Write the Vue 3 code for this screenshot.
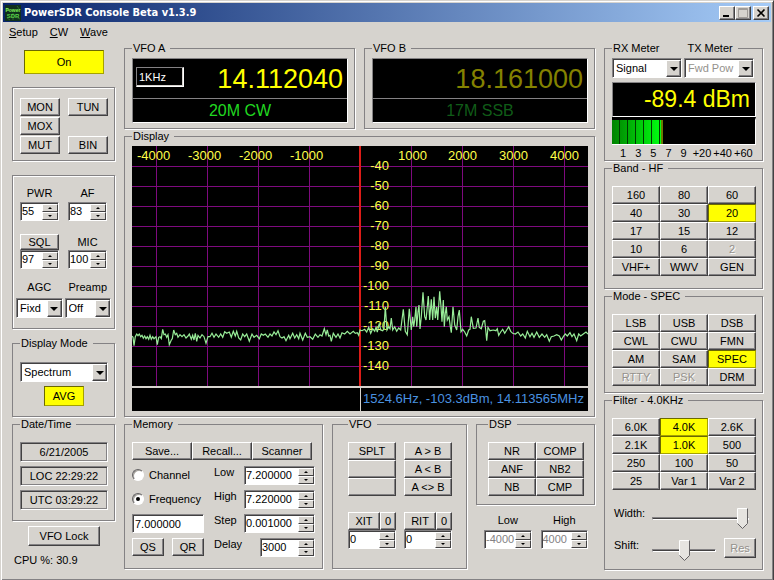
<script setup>
import { ref } from 'vue'

const bands = ['160', '80', '60', '40', '30', '20', '17', '15', '12', '10', '6', '2', 'VHF+', 'WWV', 'GEN']
const modes = ['LSB', 'USB', 'DSB', 'CWL', 'CWU', 'FMN', 'AM', 'SAM', 'SPEC', 'RTTY', 'PSK', 'DRM']
const filters = ['6.0K', '4.0K', '2.6K', '2.1K', '1.0K', '500', '250', '100', '50', '25', 'Var 1', 'Var 2']
const dsp = ['NR', 'COMP', 'ANF', 'NB2', 'NB', 'CMP']

const band = ref('20')
const mode = ref('SPEC')
const activeFilters = ['4.0K', '1.0K']
const memoryBy = ref('frequency')

const memoryFields = [
  { id: 'low', label: 'Low', value: '7.200000' },
  { id: 'high', label: 'High', value: '7.220000' },
  { id: 'step', label: 'Step', value: '0.001000' },
  { id: 'delay', label: 'Delay', value: '3000' },
]

const gridX = [24, 75, 126, 177, 279, 330, 381, 432]
const gridY = Array.from({ length: 11 }, (_, i) => 20 + i * 20)
const freqLabels = [
  [5, '-4000'], [56, '-3000'], [107, '-2000'], [158, '-1000'],
  [266, '1000'], [316, '2000'], [367, '3000'], [418, '4000'],
]

/* Spectrum samples in thirds of a pixel, grouped by sweep section. */
const sweeps = [
  {
    dx: -6, dy: 522,
    pts: '6,48 9,52 12,77 16,50 20,42 24,47 28,42 32,50 36,46 40,55 44,48 48,56 52,50 56,58 60,46 64,58 68,50 72,56 78,50 82,74 86,52 90,50 94,56 98,28 102,44 106,42 110,52 114,44 118,74 124,60 127,56 131,30 136,44 140,40 144,52 150,44 156,50 162,44 168,54 174,48 178,42 184,58 188,46 192,60 196,40 200,64 204,46 210,54 216,44 222,50 228,70 234,50',
  },
  {
    dx: -36, dy: -48,
    pts: '270,620 276,610 282,622 288,612 296,622 302,612 308,622 314,605 320,610 328,606 334,622 340,604 346,618 350,604 356,624 362,630 368,612 374,620 380,612 388,634 396,612 402,622 410,616 418,626 424,612 430,616 436,612 444,622 450,612 456,618 462,606 468,614 474,602 480,620 486,624 492,620 498,632 506,616 510,626 518,610 524,624 530,614 536,626 540,610 548,630 556,610 562,622 570,620 578,628 586,612 594,622 600,614 606,618 613,596 618,614 622,600 626,618 630,616 634,634 640,610 648,622 654,612 660,624 666,608 674,612 682,604 690,612 700,604 706,610 712,608 716,616 720,600',
  },
  {
    dx: 654, dy: -48,
    pts: '36,602 44,598 50,606 56,592 62,610 68,596 74,604 78,592 82,606 88,580 92,600 98,602 102,596 106,530 111,600 116,590 120,596 124,564 128,600 134,590 140,604 146,594 152,600 160,538 166,604 172,614 178,536 184,600 188,560 191,590 194,570 198,530 200,590 204,545 207,525 210,597 214,560 219,487 224,560 228,570 231,540 235,498 239,570 244,508 248,570 252,500 256,565 260,530 263,570 269,484 273,530 276,575 280,510 283,590 286,550 289,530 292,570 297,560 301,590 304,608 309,530 314,585 320,600 324,560 328,540 333,605 338,598 344,606 350,618 356,600 360,598 364,560 370,595 378,594 384,564 388,592 394,596 400,574 404,572 407,600 410,632 414,592 420,602 430,600 438,602 442,596 446,616 452,606 458,598 464,610 470,600 476,590 482,604 488,610 496,612 504,606 512,618 518,612 526,624 532,604 540,620 546,610 552,622 560,606 568,622 576,612 584,622 590,614 598,634 604,620 612,618 620,614 628,618 634,630 640,620 646,612 652,618 660,608 666,620 672,612 680,632 686,612 692,618 700,612 708,606 714,612',
  },
]
const trace = sweeps
  .flatMap(({ dx, dy, pts }) =>
    pts.split(' ').map((p) => {
      const [x, y] = p.split(',').map(Number)
      return `${((x + dx) / 3).toFixed(1)},${((y + dy) / 3).toFixed(1)}`
    }),
  )
  .join(' ')
</script>

<template>
  <div class="window">
    <header class="titlebar">
      <svg class="logo" viewBox="0 0 16 16" aria-hidden="true">
        <rect width="16" height="16" fill="#10301c" />
        <path d="M1 3l3 3M12 1l3 4M2 13l3 2M11 12l4 2M8 8v7" stroke="#2c6a2c" fill="none" />
        <text x="8" y="7" text-anchor="middle" class="logo-text">Power</text>
        <text x="8" y="13" text-anchor="middle" class="logo-text logo-big">SDR</text>
      </svg>
      <h1>PowerSDR Console Beta v1.3.9</h1>
      <div class="sysbuttons">
        <button class="btn" aria-label="Minimize"><svg viewBox="0 0 12 10"><rect x="2" y="7" width="6" height="2" /></svg></button>
        <button class="btn" aria-label="Maximize" disabled><svg viewBox="0 0 12 10"><path d="M1.500 .5h9v9h-9zM2 1.500h8" fill="none" stroke="#a09c98" /></svg></button>
        <button class="btn close" aria-label="Close"><svg viewBox="0 0 12 10"><path d="M2.5 1.5l7 7M9.5 1.5l-7 7" fill="none" stroke="#000" stroke-width="1.6" /></svg></button>
      </div>
    </header>

    <nav class="menu">
      <a href="#setup"><u>S</u>etup</a>
      <a href="#cw"><u>C</u>W</a>
      <a href="#wave"><u>W</u>ave</a>
    </nav>

    <main>
      <div class="col left">
        <button class="btn lit power">On</button>

        <div class="panel toggles">
          <button class="btn">MON</button>
          <button class="btn">TUN</button>
          <button class="btn first">MOX</button>
          <button class="btn first">MUT</button>
          <button class="btn">BIN</button>
        </div>

        <div class="panel levels">
          <div class="pair spins">
            <div class="cell gap2">
              <label for="pwr">PWR</label>
              <div class="spin"><input id="pwr" value="55" /><span class="arrows"><button aria-label="PWR up"></button><button aria-label="PWR down"></button></span></div>
            </div>
            <div class="cell gap2">
              <label for="af">AF</label>
              <div class="spin"><input id="af" value="83" /><span class="arrows"><button aria-label="AF up"></button><button aria-label="AF down"></button></span></div>
            </div>
          </div>
          <div class="pair spins squelch">
            <div class="cell">
              <button class="btn sql">SQL</button>
              <div class="spin"><input aria-label="SQL" value="97" /><span class="arrows"><button aria-label="SQL up"></button><button aria-label="SQL down"></button></span></div>
            </div>
            <div class="cell">
              <label class="tall" for="mic">MIC</label>
              <div class="spin"><input id="mic" value="100" /><span class="arrows"><button aria-label="MIC up"></button><button aria-label="MIC down"></button></span></div>
            </div>
          </div>
          <div class="pair combos">
            <div class="cell gap4">
              <label for="agc">AGC</label>
              <div class="combo"><select id="agc"><option>Fixd</option></select><span class="drop"></span></div>
            </div>
            <div class="cell gap4">
              <label for="preamp">Preamp</label>
              <div class="combo"><select id="preamp"><option>Off</option></select><span class="drop"></span></div>
            </div>
          </div>
        </div>

        <fieldset class="dispmode">
          <legend>Display Mode</legend>
          <div class="combo"><select aria-label="Display Mode"><option>Spectrum</option></select><span class="drop"></span></div>
          <button class="btn lit avg">AVG</button>
        </fieldset>

        <fieldset class="clock">
          <legend>Date/Time</legend>
          <output>6/21/2005</output>
          <output>LOC 22:29:22</output>
          <output>UTC 03:29:22</output>
        </fieldset>

        <button class="btn lock">VFO Lock</button>
        <p class="cpu">CPU %: 30.9</p>
      </div>

      <div class="col center">
        <div class="vfos">
          <fieldset>
            <legend>VFO A</legend>
            <div class="readout">
              <div class="freq"><input class="stepsize" aria-label="Tuning step" value="1KHz" readonly /><span>14.112040</span></div>
              <div class="bandname">20M CW</div>
            </div>
          </fieldset>
          <fieldset class="dim">
            <legend>VFO B</legend>
            <div class="readout">
              <div class="freq"><span>18.161000</span></div>
              <div class="bandname">17M SSB</div>
            </div>
          </fieldset>
        </div>

        <fieldset class="display">
          <legend>Display</legend>
          <svg class="scope" viewBox="0 0 456 240" role="img" aria-label="Spectrum">
            <rect width="456" height="240" fill="#000" />
            <g fill="#7e0a7e">
              <rect v-for="y in gridY" :key="y" x="0" :y="y" width="456" height="1" />
              <rect v-for="x in gridX" :key="x" :x="x" y="0" width="1" height="240" />
            </g>
            <rect x="227" y="0" width="2" height="240" fill="#dc1c18" />
            <g class="axis">
              <text v-for="[x, t] in freqLabels" :key="t" :x="x" y="14">{{ t }}</text>
              <text v-for="(y, i) in gridY" :key="y" x="257" :y="y + 4" text-anchor="end">{{ -40 - i * 10 }}</text>
            </g>
            <polyline :points="trace" fill="none" stroke="#98ec98" stroke-width="1.2" />
          </svg>
          <div class="status">
            <span></span>
            <span class="cursor">1524.6Hz, -103.3dBm, 14.113565MHz</span>
          </div>
        </fieldset>

        <div class="bottom">
          <fieldset class="memory">
            <legend>Memory</legend>
            <div class="actions">
              <button class="btn">Save...</button>
              <button class="btn">Recall...</button>
              <button class="btn">Scanner</button>
            </div>
            <div class="memgrid">
              <div class="memleft">
                <label class="radio"><input v-model="memoryBy" type="radio" value="channel" />Channel</label>
                <label class="radio"><input v-model="memoryBy" type="radio" value="frequency" />Frequency</label>
                <input class="text" aria-label="Memory frequency" value="7.000000" />
                <div class="quick">
                  <button class="btn">QS</button>
                  <button class="btn">QR</button>
                </div>
              </div>
              <div class="memright">
                <div v-for="f in memoryFields" :key="f.id" class="field">
                  <label :for="f.id">{{ f.label }}</label>
                  <div class="spin" :class="{ short: f.id === 'delay' }">
                    <input :id="f.id" :value="f.value" /><span class="arrows"><button :aria-label="f.label + ' up'"></button><button :aria-label="f.label + ' down'"></button></span>
                  </div>
                </div>
              </div>
            </div>
          </fieldset>

          <fieldset class="vfo">
            <legend>VFO</legend>
            <div class="vfocols">
              <div class="stack">
                <button class="btn">SPLT</button>
                <button class="btn" aria-label="Spare 1"></button>
                <button class="btn" aria-label="Spare 2"></button>
              </div>
              <div class="stack">
                <button class="btn">A &gt; B</button>
                <button class="btn">A &lt; B</button>
                <button class="btn">A &lt;&gt; B</button>
              </div>
              <div v-for="t in ['XIT', 'RIT']" :key="t" class="offset">
                <div class="tune"><button class="btn">{{ t }}</button><button class="btn zero">0</button></div>
                <div class="spin"><input :aria-label="t" value="0" /><span class="arrows"><button :aria-label="t + ' up'"></button><button :aria-label="t + ' down'"></button></span></div>
              </div>
            </div>
          </fieldset>

          <div class="dspcol">
            <fieldset class="dsp">
              <legend>DSP</legend>
              <div class="two">
                <button v-for="d in dsp" :key="d" class="btn">{{ d }}</button>
              </div>
            </fieldset>
            <div class="edges">
              <div class="cell gap3">
                <label for="flow">Low</label>
                <div class="spin"><input id="flow" value="-4000" disabled /><span class="arrows"><button disabled aria-label="Low up"></button><button disabled aria-label="Low down"></button></span></div>
              </div>
              <div class="cell gap3">
                <label for="fhigh">High</label>
                <div class="spin"><input id="fhigh" value="4000" disabled /><span class="arrows"><button disabled aria-label="High up"></button><button disabled aria-label="High down"></button></span></div>
              </div>
            </div>
          </div>
        </div>
      </div>

      <div class="col right">
        <fieldset class="meter">
          <legend><label for="rx">RX Meter</label><label for="tx">TX Meter</label></legend>
          <div class="metercombos">
            <div class="combo"><select id="rx"><option>Signal</option></select><span class="drop"></span></div>
            <div class="combo"><select id="tx" disabled><option>Fwd Pow</option></select><span class="drop"></span></div>
          </div>
          <div class="level">-89.4 dBm</div>
          <div class="bar"><span class="fill"></span></div>
          <div class="scale">
            <div class="units"><span>1</span><span>3</span><span>5</span><span>7</span><span>9</span></div>
            <div class="over"><span>+20</span><span>+40</span><span>+60</span></div>
          </div>
        </fieldset>

        <fieldset class="keys">
          <legend>Band - HF</legend>
          <div class="three">
            <button v-for="b in bands" :key="b" class="btn" :class="{ lit: b === band }" :disabled="b === '2'" @click="band = b">{{ b }}</button>
          </div>
        </fieldset>

        <fieldset class="keys short">
          <legend>Mode - {{ mode }}</legend>
          <div class="three">
            <button v-for="m in modes" :key="m" class="btn" :class="{ lit: m === mode }" :disabled="m === 'RTTY' || m === 'PSK'" @click="mode = m">{{ m }}</button>
          </div>
        </fieldset>

        <fieldset class="keys filter">
          <legend>Filter - 4.0KHz</legend>
          <div class="three">
            <button v-for="f in filters" :key="f" class="btn" :class="{ lit: activeFilters.includes(f) }">{{ f }}</button>
          </div>
          <div class="sliderrow">
            <label for="width">Width:</label>
            <input id="width" type="range" min="0" max="100" value="100" />
          </div>
          <div class="sliderrow shift">
            <label for="shift">Shift:</label>
            <input id="shift" type="range" min="0" max="100" value="50" />
            <button class="btn res" disabled>Res</button>
          </div>
        </fieldset>
      </div>
    </main>
  </div>
</template>

<style>
body {
  margin: 0;
  background: #d6d3ce;
}
</style>

<style scoped>
* {
  box-sizing: border-box;
}
.window {
  min-height: 100vh;
  min-width: 774px;
  padding: 2px;
  border: 1px solid;
  border-color: #d6d3ce #424142 #424142 #d6d3ce;
  box-shadow: inset 1px 1px 0 #fff, inset -1px -1px 0 #848284;
  background: #d6d3ce;
  color: #000;
  font: 11px/13px 'Liberation Sans', Arial, sans-serif;
}
input,
select,
button {
  font: inherit;
  color: inherit;
  margin: 0;
  border-radius: 0;
}
.titlebar {
  display: flex;
  align-items: center;
  height: 19px;
  padding: 0 2px;
  background: linear-gradient(90deg, #08246b, #a5cbf7);
}
.logo {
  width: 16px;
  height: 16px;
  margin-right: 3px;
}
.logo-text {
  font: bold 5px 'Liberation Sans', sans-serif;
  fill: #7ef05a;
}
.logo-big {
  font-size: 6px;
  fill: #5ad048;
}
h1 {
  flex: 1;
  margin: 0;
  color: #fff;
  font: bold 11px/15px 'DejaVu Sans Condensed', 'DejaVu Sans', sans-serif;
}
.sysbuttons {
  display: flex;
}
.sysbuttons .btn {
  width: 16px;
  height: 14px;
}
.sysbuttons svg {
  display: block;
  width: 12px;
  height: 10px;
  margin: 0 auto;
}
.sysbuttons .close {
  margin-left: 2px;
}
.menu {
  display: flex;
  gap: 12px;
  height: 20px;
  padding: 4px 6px;
}
.menu a {
  color: inherit;
  text-decoration: none;
}
main {
  display: grid;
  grid-template-columns: 103px 1fr 159px;
  gap: 9px;
  padding: 0 8px 8px 9px;
}
.col {
  display: flex;
  flex-direction: column;
  gap: 1px;
  min-width: 0;
}
.btn {
  height: 18px;
  padding: 0;
  border: 1px solid;
  border-color: #fff #424142 #424142 #fff;
  box-shadow: inset -1px -1px 0 #848284;
  background: #d6d3ce;
  text-align: center;
  line-height: 14px;
  white-space: nowrap;
}
.btn:disabled {
  color: #94918c;
  text-shadow: 1px 1px 0 #fff;
}
.btn.lit {
  border-color: #6b6900 #a5a200 #a5a200 #6b6900;
  box-shadow: none;
  background: #ff0;
}
fieldset {
  min-width: 0;
  margin: 0;
  padding: 0 6px 0 7px;
  border: 1px solid #848284;
  box-shadow: 1px 1px 0 #fff;
}
legend {
  height: 13px;
  padding: 0 5px 0 1px;
}
.panel {
  border: 1px solid #848284;
  box-shadow: 1px 1px 0 #fff, inset 1px 1px 0 #fff;
}

.spin {
  display: flex;
  height: 19px;
  border: 1px solid;
  border-color: #848284 #fff #fff #848284;
  box-shadow: inset 1px 1px 0 #424142;
  background: #fff;
}
.spin input {
  flex: 1;
  width: 0;
  min-width: 0;
  padding: 0 0 0 1px;
  border: 0;
  background: none;
  outline: 0;
}
.spin input:disabled {
  color: #848284;
}
.arrows {
  display: flex;
  flex-direction: column;
  width: 16px;
  padding-top: 1px;
}
.arrows button {
  display: grid;
  place-items: center;
  flex: 1;
  min-height: 0;
  padding: 0;
  border: 1px solid;
  border-color: #fff #424142 #424142 #fff;
  background: #d6d3ce;
}
.arrows button::after {
  content: '';
  border: 2px solid transparent;
  border-top: 0;
  border-bottom-color: #000;
}
.arrows button:last-child::after {
  border-top: 2px solid #000;
  border-bottom: 0;
}
.combo {
  position: relative;
  height: 20px;
  border: 1px solid;
  border-color: #848284 #fff #fff #848284;
  box-shadow: inset 1px 1px 0 #424142;
  background: #fff;
}
.combo select {
  display: block;
  width: 100%;
  height: 18px;
  padding: 0 16px 0 3px;
  border: 0;
  background: none;
  appearance: none;
}
.combo select:disabled {
  color: #94918c;
  opacity: 1;
}
.drop {
  position: absolute;
  top: 1px;
  right: 0;
  bottom: 0;
  display: grid;
  place-items: center;
  width: 15px;
  border: 1px solid;
  border-color: #fff #424142 #424142 #fff;
  box-shadow: inset -1px -1px 0 #848284;
  background: #d6d3ce;
  pointer-events: none;
}
.drop::after {
  content: '';
  border: 4px solid transparent;
  border-top-color: #000;
  border-bottom: 0;
}

.power {
  width: 80px;
  height: 24px;
  margin: 8px 0 12px 12px;
}
.toggles {
  display: grid;
  grid-template-columns: 1fr 1fr;
  gap: 1px 8px;
  padding: 10px 6px 6px 7px;
}
.first {
  grid-column: 1;
}
.levels {
  margin-top: 13px;
  padding: 11px 3px 10px;
}
.pair {
  display: grid;
  grid-template-columns: 1fr 1fr;
}
.spins {
  gap: 9px;
  padding: 0 4px;
}
.combos {
  gap: 2px;
  margin-top: 12px;
}
.squelch {
  margin-top: 13px;
}
.cell {
  display: flex;
  flex-direction: column;
  min-width: 0;
  text-align: center;
}
.gap2 {
  gap: 2px;
}
.gap3 {
  gap: 3px;
}
.gap4 {
  gap: 4px;
}
.sql,
.tall {
  height: 16px;
}
.tall {
  line-height: 16px;
}
.dispmode {
  display: flex;
  flex-direction: column;
  gap: 4px;
  margin-top: 7px;
  padding-top: 12px;
  padding-bottom: 10px;
}
.avg {
  align-self: center;
  width: 40px;
  height: 20px;
}
.clock {
  display: flex;
  flex-direction: column;
  gap: 4px;
  padding-top: 11px;
  padding-bottom: 10px;
}
.clock output {
  height: 20px;
  border: 1px solid;
  border-color: #848284 #fff #fff #848284;
  box-shadow: inset 1px 1px 0 #424142, inset -1px -1px 0 #848284;
  line-height: 18px;
  text-align: center;
}
.lock {
  width: 72px;
  height: 20px;
  margin: 4px 0 7px 16px;
}
.cpu {
  margin: 0 0 0 2px;
}

.vfos {
  display: grid;
  grid-template-columns: 1fr 1fr;
  gap: 9px;
}
.vfos fieldset {
  padding-top: 3px;
  padding-bottom: 5px;
}
.readout {
  border: 1px solid;
  border-color: #848284 #fff #fff #848284;
  background: #000;
}
.freq {
  display: flex;
  align-items: center;
  justify-content: space-between;
  height: 40px;
  padding: 0 4px 0 3px;
  border-bottom: 1px solid #848284;
  color: #ff0;
  font-size: 27px;
  line-height: 38px;
}
.freq span {
  margin-left: auto;
}
.stepsize {
  width: 48px;
  height: 20px;
  margin-bottom: 4px;
  padding: 0 2px;
  border: 1px solid;
  border-color: #848284 #fff #fff #848284;
  box-shadow: inset -1px -1px 0 #d6d3ce;
  background: #000;
  color: #fff;
  font-size: 11px;
}
.bandname {
  height: 23px;
  color: #20d820;
  font-size: 16px;
  line-height: 23px;
  text-align: center;
}
.dim .freq {
  color: #848200;
}
.dim .bandname {
  color: #105c18;
}
.display {
  padding-top: 3px;
  padding-bottom: 5px;
}
.scope {
  display: block;
  width: 100%;
}
.axis {
  fill: #ffff4a;
  font-size: 13px;
}
.status {
  display: grid;
  grid-template-columns: 1fr 1fr;
  height: 23px;
  margin-top: 2px;
  background: #000;
  color: #4a92e0;
  font-size: 13px;
  line-height: 21px;
}
.cursor {
  padding-left: 2px;
  border-left: 1px solid #d6d3ce;
  white-space: nowrap;
}
.bottom {
  display: grid;
  grid-template-columns: 199fr 135fr 119fr;
  gap: 9px;
}
.memory {
  padding: 11px 7px 11px 7px;
}
.actions {
  display: grid;
  grid-template-columns: repeat(3, 60px);
}
.memgrid {
  display: flex;
  gap: 10px;
  margin-top: 6px;
}
.memleft,
.memright {
  display: grid;
  grid-template-rows: repeat(4, 19px);
  gap: 5px;
}
.memleft {
  width: 72px;
}
.memright {
  flex: 1;
}
.radio {
  display: flex;
  align-items: center;
  gap: 5px;
}
.radio input {
  display: grid;
  place-items: center;
  flex: none;
  width: 12px;
  height: 12px;
  margin-bottom: 2px;
  border: 1px solid;
  border-color: #636163 #fff #fff #636163;
  border-radius: 50%;
  background: #fff;
  box-shadow: inset 1px 1px 0 #a5a29c;
  appearance: none;
}
.radio input:checked::after {
  content: '';
  width: 4px;
  height: 4px;
  border-radius: 50%;
  background: #000;
}
.text {
  width: 100%;
  min-width: 0;
  height: 19px;
  padding: 0 2px;
  border: 1px solid;
  border-color: #848284 #fff #fff #848284;
  box-shadow: inset 1px 1px 0 #424142;
  background: #fff;
}
.quick {
  display: flex;
  justify-content: space-between;
}
.quick .btn {
  width: 32px;
}
.field {
  display: flex;
  justify-content: space-between;
}
.field .spin {
  width: 71px;
}
.field .short {
  width: 55px;
}
.vfo {
  padding: 11px 14px 0 15px;
}
.vfocols {
  display: grid;
  grid-template-columns: 1fr 1fr;
  gap: 16px 8px;
}
.stack {
  display: grid;
}
.tune {
  display: flex;
}
.tune .btn {
  flex: 1;
}
.tune .zero {
  flex: 0 0 16px;
}
.dsp {
  padding: 11px 10px 8px 11px;
}
.two {
  display: grid;
  grid-template-columns: 1fr 1fr;
}
.edges {
  display: grid;
  grid-template-columns: 1fr 1fr;
  gap: 9px;
  padding: 9px 7px 0 8px;
}

.meter {
  padding-top: 3px;
}
.meter legend {
  display: flex;
  gap: 28px;
}
.metercombos {
  display: grid;
  grid-template-columns: 1fr 1fr;
  gap: 2px;
  padding-right: 2px;
}
.level {
  height: 35px;
  margin-top: 4px;
  padding-right: 5px;
  border: 1px solid;
  border-color: #848284 #fff #fff #848284;
  background: #000;
  color: #ff0;
  font-size: 23px;
  line-height: 33px;
  text-align: right;
}
.bar {
  display: flex;
  height: 28px;
  border-top: 3px solid #000;
  border-bottom: 1px solid #fff;
  border-right: 1px solid #fff;
  background: #000;
}
.fill {
  width: 51px;
  border-right: 2px solid #6b7b00;
  background:
    repeating-linear-gradient(90deg, transparent 0 7px, #003800 7px 8px),
    linear-gradient(90deg, #008200, #00ff10);
}
.scale {
  display: flex;
  gap: 6px;
  padding: 2px 0 0 8px;
}
.units {
  display: flex;
  gap: 9px;
}
.over {
  display: flex;
  gap: 2px;
}
.keys {
  padding: 11px 6px 12px 7px;
}
.keys.short {
  padding-bottom: 6px;
}
.keys.filter {
  padding-bottom: 7px;
}
.three {
  display: grid;
  grid-template-columns: repeat(3, 1fr);
}
.sliderrow {
  display: flex;
  align-items: center;
  height: 24px;
  margin-top: 16px;
  padding-right: 7px;
}
.sliderrow label {
  width: 40px;
  padding: 0 0 10px 2px;
}
.sliderrow input {
  flex: 1;
  min-width: 0;
  height: 22px;
  background: none;
  appearance: none;
}
.sliderrow input::-webkit-slider-runnable-track {
  height: 3px;
  border: 1px solid;
  border-color: #848284 #fff #fff #848284;
  background: #424142;
}
.sliderrow input::-webkit-slider-thumb {
  width: 11px;
  height: 21px;
  margin-top: -10px;
  background: url("data:image/svg+xml,%3Csvg xmlns='http://www.w3.org/2000/svg' viewBox='0 0 11 21'%3E%3Cpath d='M.5.5h10v15l-5 5-5-5z' fill='%23e6e4e0'/%3E%3Cpath d='M.5 15.500V.5h10' fill='none' stroke='%23fff'/%3E%3Cpath d='M10.500.5v15l-5 5-5-5' fill='none' stroke='%23636163'/%3E%3C/svg%3E");
  appearance: none;
}
.shift {
  margin-top: 8px;
  padding-right: 0;
}
.shift .res {
  width: 32px;
  height: 20px;
  margin: 0 0 4px 8px;
}
</style>
